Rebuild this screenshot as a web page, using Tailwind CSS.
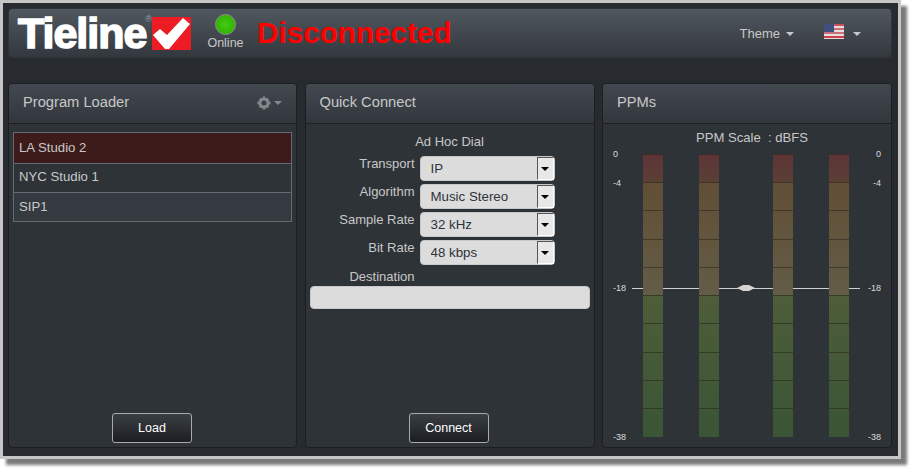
<!DOCTYPE html>
<html lang="en">
<head>
  <meta charset="UTF-8" />
  <title>Tieline</title>
  <script src="https://cdn.jsdelivr.net/npm/@tailwindcss/browser@4"></script>
</head>
<body class="w-[916px] h-[474px] overflow-hidden bg-white font-['Liberation_Sans',Arial,sans-serif] text-[#c8c8c8]">

<div class="w-[901px] h-[459px] border-[3px] border-[#c6c6c6] bg-[#272b30] shadow-[6px_6px_3px_#7a7a7a] pt-[5px] pl-[5px] pr-[6px] flex flex-col">

  <!-- Header -->
  <header class="h-[50px] shrink-0 flex items-center rounded-[4px] border border-[#2e3338] bg-[linear-gradient(to_bottom,#50575e,#33383e)] relative">
    <div class="relative w-[133px] ml-[9px] h-[34px] shrink-0 overflow-visible">
      <span class="block text-[43px] leading-[34px] font-bold text-white tracking-[-1px] [-webkit-text-stroke:1.6px_white]">Tieline</span>
      <span class="absolute right-[-1px] top-[-1px] text-[9px] leading-[9px] text-[#9aa0a6]">®</span>
    </div>
    <svg class="ml-[1px] shrink-0" width="39" height="33" viewBox="0 0 39 33">
      <rect width="39" height="33" fill="#ed1c24" />
      <path d="M1 18 L8 12 L15 18 L31 1 L38 7 L17 32 L13 32 Z" fill="#fff" />
    </svg>
    <div class="w-[37px] ml-[16px] pb-[2px] flex flex-col items-center shrink-0">
      <div class="w-[21px] h-[21px] rounded-full border-[1.5px] border-[#8a928a] bg-[radial-gradient(circle_at_50%_50%,#45cc12,#2aa802)]"></div>
      <span class="text-[12.5px] leading-[14px] mt-[1px] text-[#c8c8c8]">Online</span>
    </div>
    <span class="ml-[13px] text-[29.7px] leading-[30px] font-bold text-[#ff0000]">Disconnected</span>
    <div class="ml-auto flex items-center text-[13px] pb-[3px]">
      <span class="mt-[4px]">Theme</span>
      <span class="mt-[4px] ml-[6px] w-0 h-0 border-x-[4px] border-x-transparent border-t-[4px] border-t-[#c8c8c8]"></span>
      <svg class="ml-[30px]" width="20" height="15" viewBox="0 0 20 15">
        <rect width="20" height="15" fill="#e8dcdc" />
        <rect y="0" width="20" height="2" fill="#c8505a" />
        <rect y="4" width="20" height="2" fill="#c8707a" />
        <rect y="8" width="20" height="2" fill="#c8707a" />
        <rect y="12" width="20" height="2" fill="#c8404a" />
        <rect width="10" height="8" fill="#3f4f80" />
      </svg>
      <span class="mt-[4px] ml-[9px] mr-[30px] w-0 h-0 border-x-[4px] border-x-transparent border-t-[4px] border-t-[#c8c8c8]"></span>
    </div>
  </header>

  <!-- Panels -->
  <main class="mt-[25px] grid grid-cols-[289px_290px_290px] gap-x-[7.5px] h-[365px]">

    <!-- Program Loader -->
    <section class="flex flex-col rounded-[4px] border border-[#1c1e22] bg-[#2e3338] overflow-hidden">
      <div class="h-[40px] shrink-0 flex items-center justify-between pl-[14px] pr-[14px] pb-[2px] border-b border-[#1c1e22] bg-[linear-gradient(to_bottom,#42484f,#32373d)] text-[14.7px]">
        <span>Program Loader</span>
        <span class="flex items-center gap-[3px]">
          <svg width="14" height="14" viewBox="0 0 15 15">
            <circle cx="7.5" cy="7.5" r="4.2" fill="none" stroke="#85898e" stroke-width="3" />
            <path d="M6 0.5h3v3h-3zM6 11.5h3v3h-3zM0.5 6h3v3h-3zM11.5 6h3v3h-3zM2 4l2-2 2 2-2 2zM9 4l2-2 2 2-2 2zM2 11l2-2 2 2-2 2zM9 11l2-2 2 2-2 2z" fill="#85898e" />
          </svg>
          <span class="w-0 h-0 border-x-[4px] border-x-transparent border-t-[4px] border-t-[#85898e]"></span>
        </span>
      </div>
      <div class="flex-1 flex flex-col pt-[8px] pl-[4px] pr-[4px] pb-[4px]">
        <ul class="border border-[#666b70] text-[13.2px]">
          <li class="h-[30px] flex items-center pl-[5px] bg-[#3e1b1b]">LA Studio 2</li>
          <li class="h-[29px] flex items-center pl-[5px] pb-[2px] border-t border-[#666b70]">NYC Studio 1</li>
          <li class="h-[29px] flex items-center pl-[5px] border-t border-[#666b70] bg-[#343a40]">SIP1</li>
        </ul>
        <button class="mt-auto ml-[99px] w-[80px] h-[30px] rounded-[3px] border border-[#a9a9a9] bg-[linear-gradient(to_bottom,#3a3f44,#1c1e22)] text-white text-[12.5px]">Load</button>
      </div>
    </section>

    <!-- Quick Connect -->
    <section class="flex flex-col rounded-[4px] border border-[#1c1e22] bg-[#2e3338] overflow-hidden">
      <div class="h-[40px] shrink-0 flex items-center pl-[14px] pb-[2px] border-b border-[#1c1e22] bg-[linear-gradient(to_bottom,#42484f,#32373d)] text-[14.7px]">Quick Connect</div>
      <div class="flex-1 flex flex-col pt-[10px] px-[4px] pb-[4px] text-[13px]">
        <div class="h-[16px] leading-[16px] text-center">Ad Hoc Dial</div>
        <div class="mt-[6px] flex flex-col gap-[3px]">
          <div class="flex gap-[5px]">
            <label class="w-[105px] text-right leading-[16px]">Transport</label>
            <div class="relative w-[135px] h-[25px]">
              <select class="appearance-none w-full h-full rounded-[4px] bg-[#dcdcdc] border border-[#c8c8c8] pl-[10px] text-[13.3px] text-[#2e3338]"><option>IP</option></select>
              <span class="absolute right-[1px] top-[1px] w-[17px] h-[23px] bg-[#e8e8e8] border border-[#555] border-r-[#fff] border-b-[#fff] flex items-center justify-center"><span class="w-0 h-0 border-x-[4px] border-x-transparent border-t-[4px] border-t-black"></span></span>
            </div>
          </div>
          <div class="flex gap-[5px]">
            <label class="w-[105px] text-right leading-[16px]">Algorithm</label>
            <div class="relative w-[135px] h-[25px]">
              <select class="appearance-none w-full h-full rounded-[4px] bg-[#dcdcdc] border border-[#c8c8c8] pl-[10px] text-[13.3px] text-[#2e3338]"><option>Music Stereo</option></select>
              <span class="absolute right-[1px] top-[1px] w-[17px] h-[23px] bg-[#e8e8e8] border border-[#555] border-r-[#fff] border-b-[#fff] flex items-center justify-center"><span class="w-0 h-0 border-x-[4px] border-x-transparent border-t-[4px] border-t-black"></span></span>
            </div>
          </div>
          <div class="flex gap-[5px]">
            <label class="w-[105px] text-right leading-[16px]">Sample Rate</label>
            <div class="relative w-[135px] h-[25px]">
              <select class="appearance-none w-full h-full rounded-[4px] bg-[#dcdcdc] border border-[#c8c8c8] pl-[10px] text-[13.3px] text-[#2e3338]"><option>32 kHz</option></select>
              <span class="absolute right-[1px] top-[1px] w-[17px] h-[23px] bg-[#e8e8e8] border border-[#555] border-r-[#fff] border-b-[#fff] flex items-center justify-center"><span class="w-0 h-0 border-x-[4px] border-x-transparent border-t-[4px] border-t-black"></span></span>
            </div>
          </div>
          <div class="flex gap-[5px]">
            <label class="w-[105px] text-right leading-[16px]">Bit Rate</label>
            <div class="relative w-[135px] h-[25px]">
              <select class="appearance-none w-full h-full rounded-[4px] bg-[#dcdcdc] border border-[#c8c8c8] pl-[10px] text-[13.3px] text-[#2e3338]"><option>48 kbps</option></select>
              <span class="absolute right-[1px] top-[1px] w-[17px] h-[23px] bg-[#e8e8e8] border border-[#555] border-r-[#fff] border-b-[#fff] flex items-center justify-center"><span class="w-0 h-0 border-x-[4px] border-x-transparent border-t-[4px] border-t-black"></span></span>
            </div>
          </div>
        </div>
        <label class="mt-[4px] w-[105px] text-right leading-[16px]">Destination</label>
        <input type="text" class="mt-[1px] h-[23px] w-[280px] rounded-[4px] bg-[#dcdcdc] border border-[#c8c8c8]" />
        <button class="mt-auto ml-[99px] w-[80px] h-[30px] rounded-[3px] border border-[#a9a9a9] bg-[linear-gradient(to_bottom,#3a3f44,#1c1e22)] text-white text-[12.5px]">Connect</button>
      </div>
    </section>

    <!-- PPMs -->
    <section class="flex flex-col rounded-[4px] border border-[#1c1e22] bg-[#2e3338] overflow-hidden">
      <div class="h-[40px] shrink-0 flex items-center pl-[14px] pb-[2px] border-b border-[#1c1e22] bg-[linear-gradient(to_bottom,#42484f,#32373d)] text-[14.7px]">PPMs</div>
      <div class="flex-1 flex flex-col pt-[6px]">
        <div class="h-[16px] leading-[16px] pl-[10px] text-center text-[13.1px] whitespace-pre">PPM Scale  : dBFS</div>
        <div class="relative mt-[8px] h-[283px] flex pl-[40px] gap-[36px]">
          <!-- -18 line and scale labels sit over the meter area -->
          <div class="absolute left-[29px] w-[228px] top-[134px] h-px bg-[#d0d0d0]"></div>
          <svg class="absolute left-[134px] top-[130px]" width="18" height="8" viewBox="0 0 18 8"><path d="M0 4 L6 1 H12 L18 4 L12 7 H6 Z" fill="#d4d4d4" /></svg>
          <span class="absolute left-[10px] top-[-4px] text-[9px] leading-[9px] text-[#dcdcdc]">0</span>
          <span class="absolute left-[10px] top-[25px] text-[9px] leading-[9px] text-[#dcdcdc]">-4</span>
          <span class="absolute left-[10px] top-[130px] text-[9px] leading-[9px] text-[#dcdcdc]">-18</span>
          <span class="absolute left-[10px] top-[279px] text-[9px] leading-[9px] text-[#dcdcdc]">-38</span>
          <span class="absolute right-[10px] top-[-4px] text-[9px] leading-[9px] text-[#dcdcdc]">0</span>
          <span class="absolute right-[10px] top-[25px] text-[9px] leading-[9px] text-[#dcdcdc]">-4</span>
          <span class="absolute right-[10px] top-[130px] text-[9px] leading-[9px] text-[#dcdcdc]">-18</span>
          <span class="absolute right-[10px] top-[279px] text-[9px] leading-[9px] text-[#dcdcdc]">-38</span>
          <div class="relative w-[20px] h-full bg-[repeating-linear-gradient(to_bottom,transparent_0.7px,transparent_28px,rgba(30,30,20,0.5)_28px,rgba(30,30,20,0.5)_29px),linear-gradient(to_bottom,#5e3437_0%,#5a3f35_10%,#614e36_10%,#635c46_49.8%,#4e5d3a_49.8%,#3a5535_100%)]"></div>
          <div class="relative w-[20px] h-full bg-[repeating-linear-gradient(to_bottom,transparent_0.7px,transparent_28px,rgba(30,30,20,0.5)_28px,rgba(30,30,20,0.5)_29px),linear-gradient(to_bottom,#5e3437_0%,#5a3f35_10%,#614e36_10%,#635c46_49.8%,#4e5d3a_49.8%,#3a5535_100%)]"></div>
          <div class="relative ml-[18px] w-[20px] h-full bg-[repeating-linear-gradient(to_bottom,transparent_0.7px,transparent_28px,rgba(30,30,20,0.5)_28px,rgba(30,30,20,0.5)_29px),linear-gradient(to_bottom,#5e3437_0%,#5a3f35_10%,#614e36_10%,#635c46_49.8%,#4e5d3a_49.8%,#3a5535_100%)]"></div>
          <div class="relative w-[20px] h-full bg-[repeating-linear-gradient(to_bottom,transparent_0.7px,transparent_28px,rgba(30,30,20,0.5)_28px,rgba(30,30,20,0.5)_29px),linear-gradient(to_bottom,#5e3437_0%,#5a3f35_10%,#614e36_10%,#635c46_49.8%,#4e5d3a_49.8%,#3a5535_100%)]"></div>
        </div>
      </div>
    </section>
  </main>
</div>
</body>
</html>
